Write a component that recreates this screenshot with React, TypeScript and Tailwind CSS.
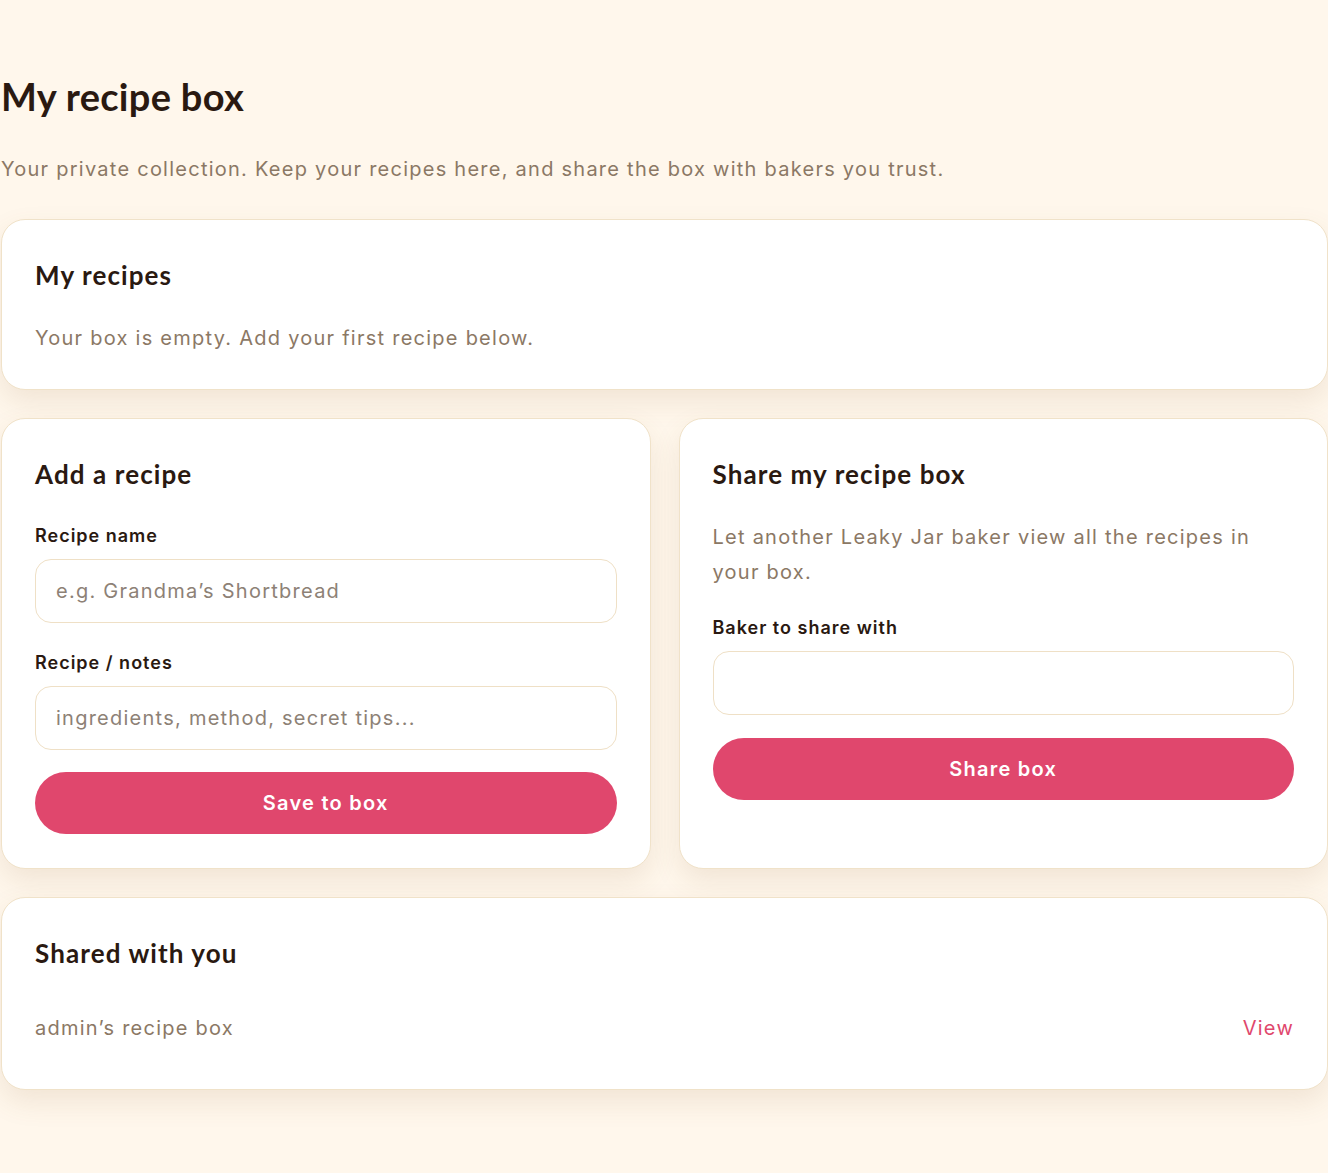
import React from 'react';

const headFont = { fontFamily: 'Lato, "Noto Sans", sans-serif' };

const Card: React.FC<{ children: React.ReactNode; className?: string }> = ({ children, className = '' }) => (
  <section
    className={`bg-white border border-[#f0e2c9] rounded-[24px] p-[33px] shadow-[0_12px_28px_rgba(140,100,50,0.12)] ${className}`}
  >
    {children}
  </section>
);

const CardTitle: React.FC<{ children: React.ReactNode }> = ({ children }) => (
  <h2 style={headFont} className="text-[26px] leading-[44px] font-bold tracking-[1.1px] text-[#2a1911]">
    {children}
  </h2>
);

const Label: React.FC<{ children: React.ReactNode }> = ({ children }) => (
  <label className="block text-[18px] leading-[27px] font-semibold tracking-[1px] text-[#2a1911] mb-[10px]">
    {children}
  </label>
);

const TextInput: React.FC<{ placeholder?: string }> = ({ placeholder }) => (
  <input
    type="text"
    placeholder={placeholder}
    className="w-full h-[64px] px-[20px] rounded-[16px] border border-[#efe0c6] bg-white text-[20px] tracking-[1.25px] text-[#2a1911] placeholder-[#8d8176] outline-none"
  />
);

const PinkButton: React.FC<{ children: React.ReactNode }> = ({ children }) => (
  <button className="w-full h-[62px] rounded-full bg-[#e0476d] text-white text-[20px] font-semibold tracking-[1.25px]">
    {children}
  </button>
);

export default function App() {
  return (
    <div
      className="min-h-screen bg-[#fff7ec] pt-[72px] pb-[80px] pl-[1px] tracking-[1.25px]"
      style={{ fontFamily: 'Inter, "Noto Sans", sans-serif' }}
    >
      <h1 style={headFont} className="text-[38px] leading-[48px] font-bold tracking-[0.3px] text-[#2a1911]">
        My recipe box
      </h1>
      <p className="mt-[32px] text-[20px] leading-[35px] text-[#8b7865]">
        Your private collection. Keep your recipes here, and share the box with bakers you trust.
      </p>

      <div className="mt-[32px] flex flex-col gap-[28px]">
        <Card>
          <CardTitle>My recipes</CardTitle>
          <p className="mt-[24px] text-[20px] leading-[35px] text-[#8b7865]">
            Your box is empty. Add your first recipe below.
          </p>
        </Card>

        <div className="grid grid-cols-2 gap-[28px]">
          <Card className="pb-[34px]">
            <CardTitle>Add a recipe</CardTitle>
            <div className="mt-[26px]">
              <Label>Recipe name</Label>
              <TextInput placeholder="e.g. Grandma’s Shortbread" />
            </div>
            <div className="mt-[26px]">
              <Label>Recipe / notes</Label>
              <TextInput placeholder="ingredients, method, secret tips..." />
            </div>
            <div className="mt-[22px]">
              <PinkButton>Save to box</PinkButton>
            </div>
          </Card>

          <Card>
            <CardTitle>Share my recipe box</CardTitle>
            <p className="mt-[24px] text-[20px] leading-[35px] text-[#8b7865]">
              Let another Leaky Jar baker view all the recipes in your box.
            </p>
            <div className="mt-[24px]">
              <Label>Baker to share with</Label>
              <TextInput />
            </div>
            <div className="mt-[23px]">
              <PinkButton>Share box</PinkButton>
            </div>
          </Card>
        </div>

        <Card>
          <CardTitle>Shared with you</CardTitle>
          <div className="mt-[27px] pt-[9px] pb-[10px] flex items-center justify-between text-[20px] leading-[35px]">
            <span className="text-[#8b7865]">admin’s recipe box</span>
            <a href="#" className="text-[#e0476d]">View</a>
          </div>
        </Card>
      </div>
    </div>
  );
}
